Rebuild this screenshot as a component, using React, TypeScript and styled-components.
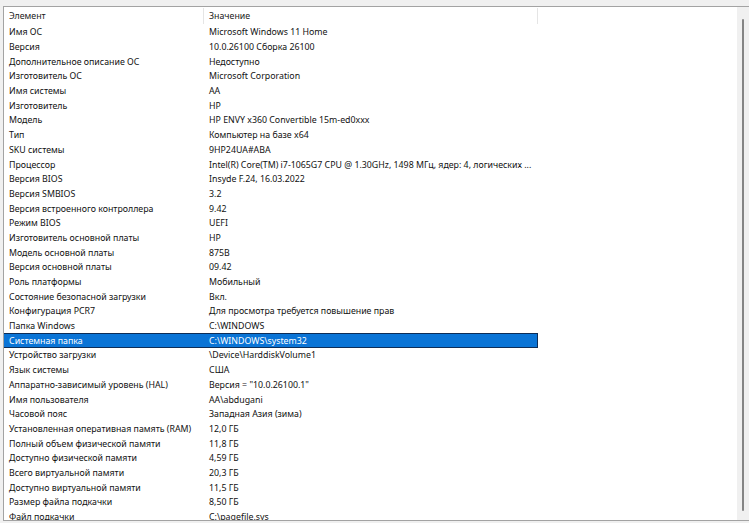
import styled, { createGlobalStyle } from 'styled-components';

const GlobalStyle = createGlobalStyle`
  html, body {
    margin: 0;
    padding: 0;
    background: #f0f0f0;
  }
  body {
    font-family: "Noto Sans", "Liberation Sans", sans-serif;
    -webkit-font-smoothing: antialiased;
  }
`;

const Window = styled.div`
  width: 749px;
  height: 523px;
  background: #f0f0f0;
  padding: 6px 0 0 3px;
  box-sizing: border-box;
  overflow: hidden;
`;

const Panel = styled.div`
  display: flex;
  height: 515px;
  border-top: 1px solid #a3a3a3;
  border-left: 1px solid #a3a3a3;
  border-bottom: 1px solid #a3a3a3;
  background: #ffffff;
  box-sizing: border-box;
`;

const ListArea = styled.div`
  flex: 1;
  overflow: hidden;
`;

const HeaderRow = styled.div`
  display: grid;
  grid-template-columns: 200px 334px 1fr;
  height: 17px;
  padding-top: 1px;
  box-sizing: border-box;
  align-items: center;
  font-size: 8.8px;
  color: #1a1a1a;
`;

const HeaderCell = styled.div<{ $sep?: boolean }>`
  padding-left: 5px;
  height: 100%;
  display: flex;
  align-items: center;
  border-right: ${(p) => (p.$sep ? '1px solid #e5e5e5' : 'none')};
`;

const Rows = styled.div`
  padding-top: 1px;
`;

const Row = styled.div<{ $selected?: boolean }>`
  display: grid;
  grid-template-columns: 200px 334px;
  height: 14.7px;
  align-items: center;
  font-size: 8.8px;
  color: ${(p) => (p.$selected ? '#ffffff' : '#111111')};
  width: 534px;
  box-sizing: border-box;
  background: ${(p) => (p.$selected ? '#0a74d6' : 'transparent')};
  border: 1px solid ${(p) => (p.$selected ? '#0d2d57' : 'transparent')};
  border-left: none;
`;

const Cell = styled.div`
  padding-left: 5px;
  white-space: nowrap;
  overflow: hidden;
`;

const ScrollBar = styled.div`
  width: 12px;
  background: #f0f0f0;
  display: flex;
  justify-content: center;
  padding-top: 12px;
  box-sizing: border-box;
`;

const Thumb = styled.div`
  width: 2px;
  height: 492px;
  background: #858585;
  border-radius: 1px;
`;

const rows: [string, string][] = [
  ['Имя ОС', 'Microsoft Windows 11 Home'],
  ['Версия', '10.0.26100 Сборка 26100'],
  ['Дополнительное описание ОС', 'Недоступно'],
  ['Изготовитель ОС', 'Microsoft Corporation'],
  ['Имя системы', 'AA'],
  ['Изготовитель', 'HP'],
  ['Модель', 'HP ENVY x360 Convertible 15m-ed0xxx'],
  ['Тип', 'Компьютер на базе x64'],
  ['SKU системы', '9HP24UA#ABA'],
  ['Процессор', 'Intel(R) Core(TM) i7-1065G7 CPU @ 1.30GHz, 1498 МГц, ядер: 4, логических ...'],
  ['Версия BIOS', 'Insyde F.24, 16.03.2022'],
  ['Версия SMBIOS', '3.2'],
  ['Версия встроенного контроллера', '9.42'],
  ['Режим BIOS', 'UEFI'],
  ['Изготовитель основной платы', 'HP'],
  ['Модель основной платы', '875B'],
  ['Версия основной платы', '09.42'],
  ['Роль платформы', 'Мобильный'],
  ['Состояние безопасной загрузки', 'Вкл.'],
  ['Конфигурация PCR7', 'Для просмотра требуется повышение прав'],
  ['Папка Windows', 'C:\\WINDOWS'],
  ['Системная папка', 'C:\\WINDOWS\\system32'],
  ['Устройство загрузки', '\\Device\\HarddiskVolume1'],
  ['Язык системы', 'США'],
  ['Аппаратно-зависимый уровень (HAL)', 'Версия = "10.0.26100.1"'],
  ['Имя пользователя', 'AA\\abdugani'],
  ['Часовой пояс', 'Западная Азия (зима)'],
  ['Установленная оперативная память (RAM)', '12,0 ГБ'],
  ['Полный объем физической памяти', '11,8 ГБ'],
  ['Доступно физической памяти', '4,59 ГБ'],
  ['Всего виртуальной памяти', '20,3 ГБ'],
  ['Доступно виртуальной памяти', '11,5 ГБ'],
  ['Размер файла подкачки', '8,50 ГБ'],
  ['Файл подкачки', 'C:\\pagefile.sys'],
];

const App = () => {
  return (
    <Window>
      <GlobalStyle />
      <Panel>
        <ListArea>
          <HeaderRow>
            <HeaderCell $sep>Элемент</HeaderCell>
            <HeaderCell $sep>Значение</HeaderCell>
            <HeaderCell />
          </HeaderRow>
          <Rows>
            {rows.map(([name, value], idx) => (
              <Row key={idx} $selected={name === 'Системная папка'}>
                <Cell>{name}</Cell>
                <Cell>{value}</Cell>
              </Row>
            ))}
          </Rows>
        </ListArea>
        <ScrollBar>
          <Thumb />
        </ScrollBar>
      </Panel>
    </Window>
  );
};

export default App;
